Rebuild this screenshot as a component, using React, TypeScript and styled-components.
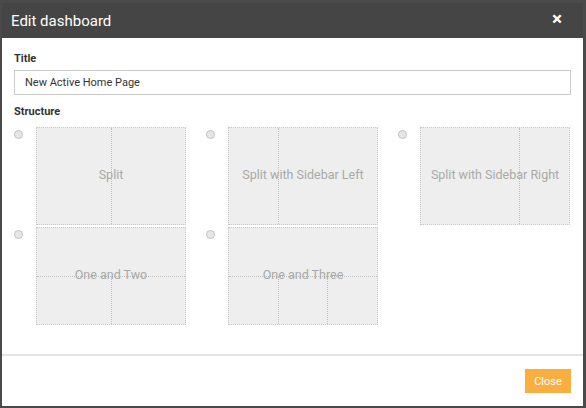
import React, {FC} from 'react';
import styled, {createGlobalStyle} from 'styled-components';

const Global = createGlobalStyle`
*, *::before, *::after {
    box-sizing: border-box;
}
html, body {
    margin: 0;
    padding: 0;
    background: #4a4a4a;
    font-family: Roboto, "Liberation Sans", Arial, sans-serif;
}
`
//Modal
const Modal = styled.div`
margin: 3px 3px 2px 2px;
height: 403px;
background: #ffffff;
display: flex;
flex-direction: column;
`
const Header = styled.div`
height: 35px;
background: #454545;
color: #ffffff;
display: flex;
align-items: center;
justify-content: space-between;
padding: 0 21px 0 9px;
h1{
    margin: 0;
    font-size: 15px;
    font-weight: 400;
}
`
const CloseX = styled.span`
font-size: 19px;
font-weight: 700;
line-height: 1;
margin-top: -4px;
`
const Body = styled.div`
flex: 1;
padding: 14px 12px 0 12px;
border-bottom: 2px solid #e3e3e3;
`
const Label = styled.div`
font-size: 11px;
font-weight: 700;
color: #333;
margin-bottom: 5px;
`
const Input = styled.div`
height: 25px;
border: 1px solid #cccccc;
font-size: 11px;
color: #333;
display: flex;
align-items: center;
padding-left: 10px;
margin-bottom: 10px;
`
//Structure grid
const Grid = styled.div`
display: grid;
grid-template-columns: repeat(3, 172px);
column-gap: 20px;
row-gap: 2px;
margin-top: 9px;
`
const Option = styled.div`
display: flex;
align-items: flex-start;
`
const Radio = styled.span`
width: 9px;
height: 9px;
border-radius: 50%;
background: #e6e6e6;
border: 1px solid #c4c4c4;
margin: 3px 13px 0 0;
`
const Tile = styled.div`
position: relative;
width: 150px;
height: 98px;
background: #eeeeee;
border: 1px dotted #c8c8c8;
display: flex;
flex-direction: column;
`
const Row = styled.div`
flex: 1;
display: flex;
& + &{
    border-top: 1px dotted #bdbdbd;
}
`
const Cell = styled.div<{$grow: number}>`
flex: ${p => p.$grow};
& + &{
    border-left: 1px dotted #bdbdbd;
}
`
const Name = styled.span`
position: absolute;
inset: 0;
display: flex;
align-items: center;
justify-content: center;
padding-bottom: 3px;
font-size: 12.5px;
color: #a9a9a9;
white-space: nowrap;
`
const Footer = styled.div`
height: 50px;
display: flex;
justify-content: flex-end;
align-items: flex-start;
padding: 13px 12px 0 0;
`
const Button = styled.button`
width: 46px;
height: 24px;
border: none;
background: #fbae40;
color: #fff;
font-family: inherit;
font-size: 11px;
padding: 0;
`

const layouts = [
    {name: 'Split', rows: [[1, 1]]},
    {name: 'Split with Sidebar Left', rows: [[1, 2]]},
    {name: 'Split with Sidebar Right', rows: [[2, 1]]},
    {name: 'One and Two', rows: [[1], [1, 1]]},
    {name: 'One and Three', rows: [[1], [1, 1, 1]]},
];

const App: FC = () => {
    return (
        <>
            <Global/>
            <Modal>
                <Header>
                    <h1>Edit dashboard</h1>
                    <CloseX>×</CloseX>
                </Header>
                <Body>
                    <Label>Title</Label>
                    <Input>New Active Home Page</Input>
                    <Label>Structure</Label>
                    <Grid>
                        {layouts.map(l => (
                            <Option key={l.name}>
                                <Radio/>
                                <Tile>
                                    {l.rows.map((r, i) => (
                                        <Row key={i}>
                                            {r.map((g, j) => <Cell key={j} $grow={g}/>)}
                                        </Row>
                                    ))}
                                    <Name>{l.name}</Name>
                                </Tile>
                            </Option>
                        ))}
                    </Grid>
                </Body>
                <Footer>
                    <Button>Close</Button>
                </Footer>
            </Modal>
        </>
    );
}

export default App;
